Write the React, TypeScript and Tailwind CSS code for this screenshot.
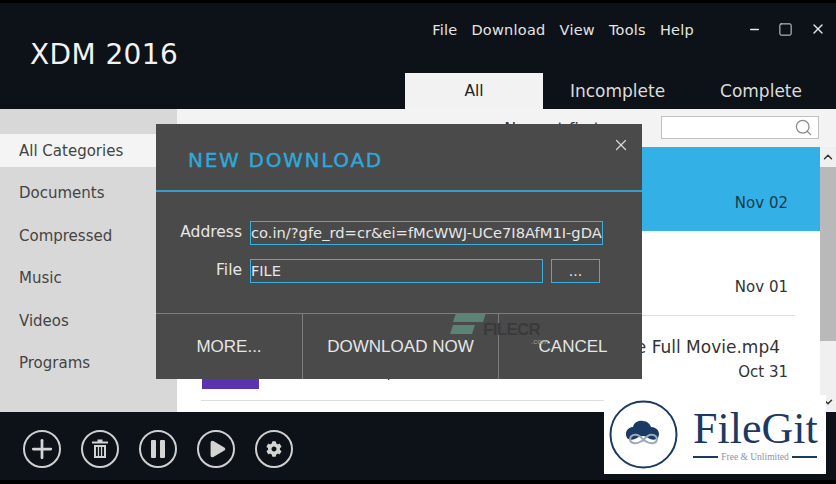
import { ChevronDown, ChevronUp, Minus, Pause, Play, Plus, Search, Square, X } from "lucide-react";
import { FaCog } from "react-icons/fa";

const categories = ["Documents", "Compressed", "Music", "Videos", "Programs"];
const menu = ["File", "Download", "View", "Tools", "Help"];

function Row({ title, meta, date, active, thumb }: { title: string; meta: string; date: string; active?: boolean; thumb: string }) {
  return (
    <div className={`h-[84px] flex ${active ? "bg-[#33b1e6] text-[#1b3a4b]" : "text-[#333]"}`}>
      <div className="w-[25px]" />
      <div className={`mt-[16px] w-[57px] h-[57px] ${thumb}`} />
      <div className="flex-1 pl-[9px] pt-[19px]">
        <div className="h-[24px] text-[17px] leading-[24px] whitespace-nowrap text-right pr-[40px]">{title}</div>
        <div className="flex justify-between pr-[32px] pt-[1px] text-[15px] leading-[24px]">
          <span>{meta}</span>
          <span>{date}</span>
        </div>
      </div>
    </div>
  );
}

function RoundButton({ children }: { children: React.ReactNode }) {
  return (
    <button className="w-[38px] h-[38px] rounded-full border-2 border-[#cfcfcf] flex items-center justify-center text-[#d4d4d4]">
      {children}
    </button>
  );
}

export default function App() {
  return (
    <div className="relative w-[836px] h-[484px] overflow-hidden bg-black pt-[3px] pb-[4px] flex flex-col font-['DejaVu_Sans',sans-serif]">
      {/* Title bar */}
      <header className="h-[106px] bg-[#0d1218] flex shrink-0">
        <div className="pl-[30px] pt-[34px] text-[28px] leading-[36px] tracking-[0.4px] text-[#f2f2f2]">XDM 2016</div>
        <div className="ml-auto flex flex-col items-end">
          <div className="flex items-start">
            <nav className="flex gap-[14px] pt-[17px] text-[14.5px] tracking-[0.25px] leading-[20px] text-[#e4e4e4] mr-[54px]">
              {menu.map((m) => (
                <span key={m}>{m}</span>
              ))}
            </nav>
            <div className="flex items-center gap-[17px] pt-[18px] pr-[10px] text-[#e4e4e4]">
              <Minus size={13} strokeWidth={2.8} />
              <Square size={15} strokeWidth={1.5} />
              <X size={16} strokeWidth={2} />
            </div>
          </div>
          <div className="mt-auto flex items-stretch h-[36px] text-[17px] w-[431px]">
            <div className="w-[138px] bg-[#f2f2f2] text-[#222] flex items-center justify-center pt-[2px] text-[15.5px]">All</div>
            <div className="w-[149px] text-[#dcdcdc] flex items-center justify-center pt-[2px]">Incomplete</div>
            <div className="flex-1 text-[#dcdcdc] flex items-center justify-center pt-[2px] pr-[6px]">Complete</div>
          </div>
        </div>
      </header>

      {/* Body */}
      <div className="flex-1 flex min-h-0">
        <aside className="w-[177px] bg-[#d8d8d8] pt-[25px] text-[15px] text-[#444] shrink-0">
          <div className="h-[33px] bg-[#f4f4f4] pl-[19px] pt-[1px] flex items-center">All Categories</div>
          <div className="flex flex-col pt-[5px]">
            {categories.map((c) => (
              <div key={c} className="h-[42.5px] pl-[19px] flex items-center">
                {c}
              </div>
            ))}
          </div>
        </aside>
        <main className="flex-1 bg-white flex flex-col min-w-0">
          <div className="h-[38px] bg-[#f3f3f3] flex justify-end items-start pt-[7px] pr-[17px] shrink-0">
            <span className="mr-[61px] pt-[3px] text-[16px] leading-[20px] text-[#333]">Newest first</span>
            <div className="w-[158px] h-[23px] bg-white border border-[#c0c0c0] flex items-center justify-end pr-[5px]">
              <Search size={19} className="text-[#8a8a8a]" strokeWidth={1.6} />
            </div>
          </div>
          <div className="flex-1 flex min-h-0">
            <div className="flex-1 min-w-0">
              <Row active title="" meta="" date="Nov 02" thumb="" />
              <Row title="" meta="" date="Nov 01" thumb="" />
              <div className="ml-[24px] mr-[25px] border-b border-[#dddddd]" />
              <Row title="e Full Movie.mp4" meta="12.14 GB / Complete" date="Oct 31" thumb="bg-[#5b33b0]" />
              <div className="ml-[24px] mr-[25px] border-b border-[#dddddd]" />
            </div>
            <div className="w-[16px] bg-[#f0f0f0] flex flex-col items-center text-[#333] shrink-0">
              <ChevronUp size={14} strokeWidth={2.5} className="mt-[3px]" />
              <div className="w-full h-[174px] mt-[3px] bg-[#b9b9b9]" />
              <ChevronDown size={14} strokeWidth={2.5} className="mt-[54px]" />
            </div>
          </div>
        </main>
      </div>

      {/* Bottom toolbar */}
      <footer className="h-[68px] bg-[#0d1218] flex items-center gap-[20px] pl-[23px] pt-[6px] shrink-0">
        <RoundButton><Plus size={30} strokeWidth={2.2} /></RoundButton>
        <RoundButton>
          <svg width="20" height="22" viewBox="0 0 20 22" fill="currentColor">
            <path d="M2 3.5h16v2H2Z M7.5 1.5h5v2h-5Z" />
            <path fillRule="evenodd" d="M4 7h12v13H4Z M6 9v9h1.8V9Z M9.1 9v9h1.8V9Z M12.2 9v9H14V9Z" />
          </svg>
        </RoundButton>
        <RoundButton><Pause size={24} fill="currentColor" strokeWidth={0} /></RoundButton>
        <RoundButton><Play size={22} fill="currentColor" strokeWidth={0} className="ml-[1px]" /></RoundButton>
        <RoundButton><FaCog size={16} /></RoundButton>
      </footer>

      {/* New download dialog */}
      <div className="absolute left-[156px] top-[124px] w-[486px] h-[255px] bg-[#4a4a4a] flex flex-col text-[#e6e6e6]">
        <div className="h-[68px] border-b-2 border-[#33a0cc] flex items-start justify-between pl-[32px] pr-[12px] shrink-0">
          <span className="pt-[23px] text-[20px] leading-[26px] tracking-[1.7px] text-[#2fa8dc] [-webkit-text-stroke:0.4px_#2fa8dc]">NEW DOWNLOAD</span>
          <X size={18} strokeWidth={1.6} className="mt-[12px] text-[#d8d8d8]" />
        </div>
        <div className="flex-1 pt-[29px]">
          <div className="flex items-center h-[24px]">
            <span className="w-[86px] text-right text-[15.5px]">Address</span>
            <div className="ml-[8px] w-[353px] h-[24px] border border-[#38b0e0] text-[14.7px] leading-[22px] overflow-hidden whitespace-nowrap">co.in/?gfe_rd=cr&amp;ei=fMcWWJ-UCe7I8AfM1I-gDA</div>
          </div>
          <div className="flex items-center h-[24px] mt-[14px]">
            <span className="w-[86px] text-right text-[15.5px]">File</span>
            <div className="ml-[8px] w-[293px] h-[24px] border border-[#38b0e0] text-[14.5px] leading-[22px]">FILE</div>
            <div className="ml-[8px] w-[49px] h-[24px] border border-[#38b0e0] text-center text-[14px] leading-[22px]">...</div>
          </div>
        </div>
        <div className="h-[66px] border-t border-[#7c7c7c] flex text-[17px] font-['Liberation_Sans',sans-serif] shrink-0">
          <div className="w-[147px] border-r border-[#7c7c7c] flex items-center justify-center">MORE...</div>
          <div className="w-[196px] border-r border-[#7c7c7c] flex items-center justify-center">DOWNLOAD NOW</div>
          <div className="flex-1 flex items-center justify-center pl-[5px]">CANCEL</div>
        </div>
      </div>

      {/* FileCR watermark */}
      <div className="absolute left-[450px] top-[313px] flex items-start">
        <svg width="36" height="22" viewBox="0 0 36 22" className="shrink-0">
          <path d="M6 0H36L33 9H3Z M3 12H25L22 21H0Z" fill="#5d8376" />
        </svg>
        <div className="relative -ml-[3px] pt-[8px] text-[17px] leading-[18px] font-bold tracking-[-0.7px] text-[#3a3a3a] font-['Liberation_Sans',sans-serif]">
          FILECR
          <span className="absolute left-[48px] top-[25px] text-[8px] leading-[8px] tracking-normal font-normal text-[#999]">.com</span>
        </div>
      </div>

      {/* FileGit badge */}
      <div className="absolute left-[604px] top-[395px] w-[222px] h-[79px] bg-white flex items-center pl-[5px]">
        <svg width="69" height="69" viewBox="0 0 69 69" className="shrink-0">
          <circle cx="34.5" cy="34.5" r="33" fill="none" stroke="#1b3a63" strokeWidth="2" />
          <path d="M18 38c-3-6 1-11 6-11 1-5 6-7 10-6 4 0 7 3 8 6 6 0 10 5 7 11-2 2-5 2-8 1-3-2-5-3-7-3-2 0-5 1-8 3-3 1-6 1-8-1Z" fill="#1b3a63" />
          <path d="M34.5 40c-3-4-7-6-10-5-4 1-5 7 0 8 4 1 7-1 10-3 3 2 6 4 10 3 5-1 4-7 0-8-3-1-7 1-10 5Z" fill="none" stroke="#9aa9bc" strokeWidth="2" />
        </svg>
        <div className="ml-[15px] flex flex-col w-[124px] pt-[2px]">
          <div className="text-[44px] leading-[40px] text-[#1b3a63] font-['Liberation_Serif',serif] whitespace-nowrap">FileGit</div>
          <div className="flex items-center gap-[3px] mt-[3px]">
            <div className="h-[2px] flex-1 bg-[#1b3a63]" />
            <span className="text-[9.5px] leading-[10px] text-[#8a94a3] font-['Liberation_Serif',serif] whitespace-nowrap">Free &amp; Unlimited</span>
            <div className="h-[2px] flex-1 bg-[#1b3a63]" />
          </div>
        </div>
      </div>
    </div>
  );
}
